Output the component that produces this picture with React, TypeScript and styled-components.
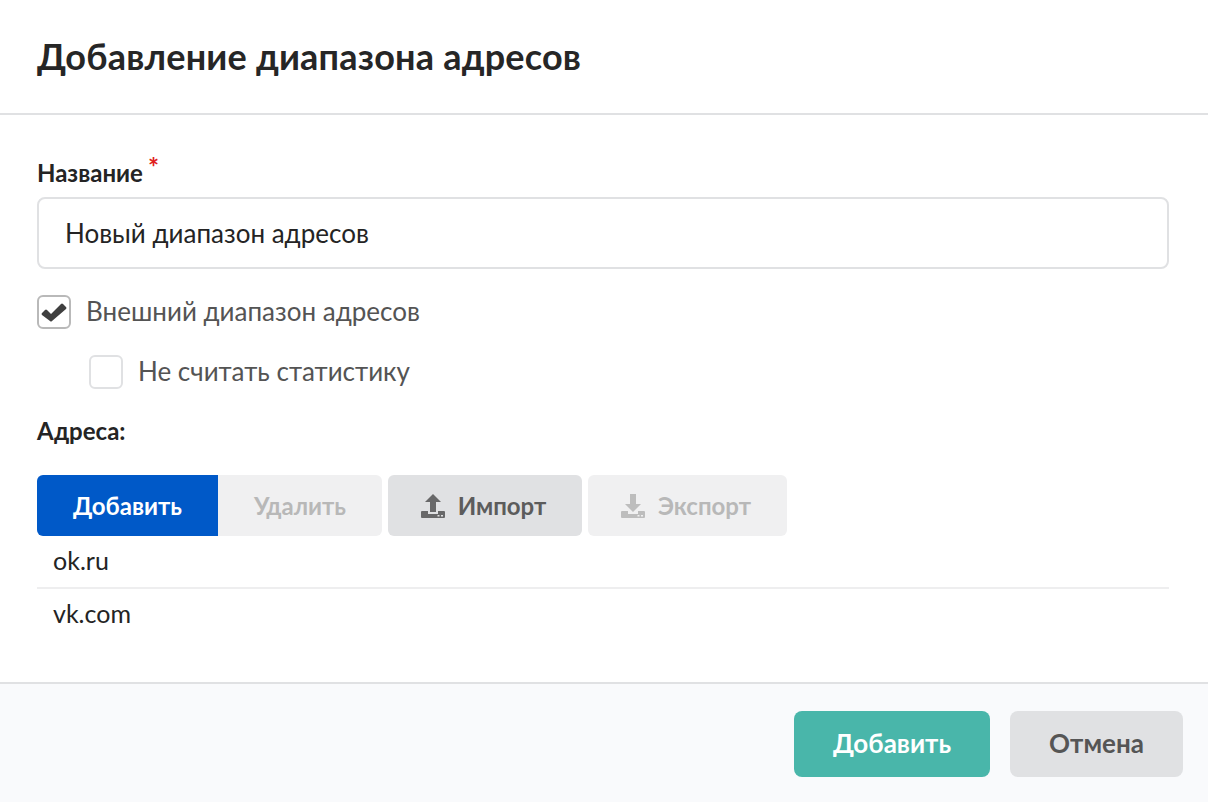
import React from "react";
import styled, { createGlobalStyle } from "styled-components";

const GlobalStyle = createGlobalStyle`
    html, body {
        margin: 0;
        padding: 0;
        background: #fff;
    }
    body {
        font-family: "Lato", "Noto Sans", "Open Sans", sans-serif;
        color: #242424;
    }
`;

function TrayIcon({ direction }: { direction: "up" | "down" }) {
    const arrow =
        direction === "up"
            ? "M12 0 L20 8 H15 V18 H9 V8 H4 Z"
            : "M9 0 H15 V10 H20 L12 18 L4 10 H9 Z";
    return (
        <svg width="24" height="24" viewBox="0 0 24 24" fill="currentColor" opacity="0.9">
            <path d={arrow} />
            <path
                fillRule="evenodd"
                d="M1 17 H7 V20 H17 V17 H23 Q24 17 24 18 V23 Q24 24 23 24 H1 Q0 24 0 23 V18 Q0 17 1 17 Z M16.5 21 h2 v1.5 h-2 Z M20 21 h2 v1.5 h-2 Z"
            />
        </svg>
    );
}

export default function App() {
    return (
        <>
            <GlobalStyle />
            <Dialog>
                <Header>
                    <Title>Добавление диапазона адресов</Title>
                </Header>
                <Body>
                    <FieldLabel>
                        Название<Required>*</Required>
                    </FieldLabel>
                    <NameInput defaultValue="Новый диапазон адресов" />
                    <CheckRow>
                        <CheckBox $checked>
                            <svg width="26" height="20" viewBox="0 0 26 20" fill="#3f3f3f">
                                <path d="M1 11 L4 8 Q5 7 6 8 L10 12 L20 2 Q21 1 22 2 L25 5 Q26 6 25 7 L11 19 Q10 20 9 19 L1 13 Q0 12 1 11 Z" />
                            </svg>
                        </CheckBox>
                        <CheckText>Внешний диапазон адресов</CheckText>
                    </CheckRow>
                    <CheckRow $nested>
                        <CheckBox />
                        <CheckText>Не считать статистику</CheckText>
                    </CheckRow>
                    <SectionLabel>Адреса:</SectionLabel>
                    <Toolbar>
                        <SplitGroup>
                            <PrimaryButton>Добавить</PrimaryButton>
                            <DeleteButton disabled>Удалить</DeleteButton>
                        </SplitGroup>
                        <ToolButton $width={194}>
                            <TrayIcon direction="up" />
                            Импорт
                        </ToolButton>
                        <ToolButton $width={199} disabled>
                            <TrayIcon direction="down" />
                            Экспорт
                        </ToolButton>
                    </Toolbar>
                    <AddressList>
                        <AddressRow>ok.ru</AddressRow>
                        <AddressRow>vk.com</AddressRow>
                    </AddressList>
                </Body>
                <Footer>
                    <SubmitButton>Добавить</SubmitButton>
                    <CancelButton>Отмена</CancelButton>
                </Footer>
            </Dialog>
        </>
    );
}

const Dialog = styled.div`
    width: 1208px;
    height: 802px;
    display: flex;
    flex-direction: column;
    overflow: hidden;
`;

const Header = styled.div`
    height: 113px;
    flex: none;
    display: flex;
    align-items: center;
    padding-left: 37px;
    border-bottom: 2px solid #e0e1e3;
`;

const Title = styled.h1`
    margin: -2px 0 0;
    font-size: 36px;
    font-weight: 700;
    letter-spacing: 0.2px;
    color: #262626;
`;

const Body = styled.div`
    flex: 1;
    display: flex;
    flex-direction: column;
    padding: 0 39px 0 37px;
`;

const FieldLabel = styled.div`
    height: 30px;
    margin-top: 43px;
    margin-bottom: 9px;
    line-height: 30px;
    font-size: 24px;
    font-weight: 700;
`;

const Required = styled.span`
    position: relative;
    top: -5px;
    margin-left: 5px;
    font-size: 26px;
    line-height: 0;
    color: #e02020;
`;

const NameInput = styled.input`
    box-sizing: border-box;
    width: 100%;
    height: 72px;
    padding: 0 26px;
    border: 2px solid #e0e1e3;
    border-radius: 8px;
    outline: none;
    font: 400 26px "Lato", "Noto Sans", sans-serif;
    color: #242424;
`;

const CheckRow = styled.label<{ $nested?: boolean }>`
    display: flex;
    align-items: center;
    gap: 15px;
    height: 34px;
    margin-top: 26px;
    margin-left: ${(p) => (p.$nested ? "52px" : "0")};
`;

const CheckBox = styled.span<{ $checked?: boolean }>`
    box-sizing: border-box;
    flex: none;
    width: 34px;
    height: 34px;
    display: flex;
    align-items: center;
    justify-content: center;
    border: 2px solid ${(p) => (p.$checked ? "#b9b9b9" : "#e0e1e3")};
    border-radius: 6px;
`;

const CheckText = styled.span`
    margin-top: -2px;
    font-size: 26px;
    color: #545454;
`;

const SectionLabel = styled.div`
    height: 30px;
    margin-top: 27px;
    line-height: 30px;
    font-size: 24px;
    font-weight: 700;
`;

const Toolbar = styled.div`
    display: flex;
    gap: 6px;
    margin-top: 29px;
`;

const SplitGroup = styled.div`
    display: flex;
`;

const BaseButton = styled.button`
    height: 61px;
    display: flex;
    align-items: center;
    justify-content: center;
    gap: 13px;
    padding: 0;
    border: none;
    font: 700 24px "Lato", "Noto Sans", sans-serif;
`;

const PrimaryButton = styled(BaseButton)`
    width: 181px;
    border-radius: 6px 0 0 6px;
    background: #0059c8;
    color: #fff;
`;

const DeleteButton = styled(BaseButton)`
    width: 164px;
    border-radius: 0 6px 6px 0;
    background: #f0f0f1;
    color: #b8b8b8;
`;

const ToolButton = styled(BaseButton)<{ $width: number }>`
    width: ${(p) => p.$width}px;
    padding-right: 3px;
    border-radius: 6px;
    background: #e0e1e3;
    color: #5c5c5c;

    &:disabled {
        background: #f0f0f1;
        color: #b8b8b8;
    }
`;

const AddressList = styled.div`
    display: flex;
    flex-direction: column;
`;

const AddressRow = styled.div`
    height: 47px;
    display: flex;
    align-items: center;
    padding: 0 0 4px 16px;
    font-size: 25px;
    color: #242424;

    &:first-child {
        border-bottom: 2px solid #eeeeef;
    }
`;

const Footer = styled.div`
    box-sizing: border-box;
    height: 120px;
    flex: none;
    display: flex;
    justify-content: flex-end;
    gap: 20px;
    padding: 27px 25px 0 0;
    border-top: 2px solid #e0e1e3;
    background: #f9fafc;
`;

const FooterButton = styled.button`
    height: 66px;
    padding: 0 0 2px;
    border: none;
    border-radius: 8px;
    font: 700 26px "Lato", "Noto Sans", sans-serif;
`;

const SubmitButton = styled(FooterButton)`
    width: 196px;
    background: #49b6aa;
    color: #fff;
`;

const CancelButton = styled(FooterButton)`
    width: 173px;
    background: #e0e1e3;
    color: #555555;
`;
